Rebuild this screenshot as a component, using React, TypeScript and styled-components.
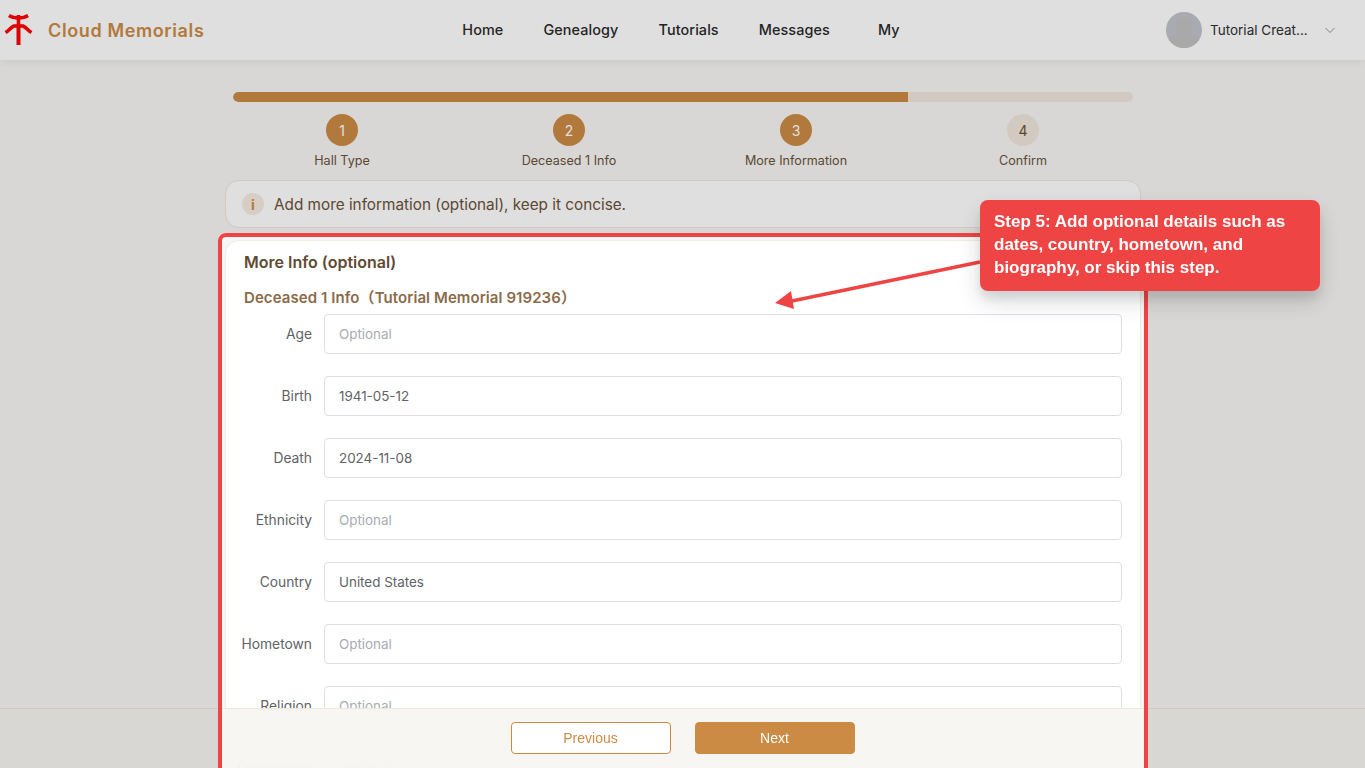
import React from 'react';
import styled, { createGlobalStyle } from 'styled-components';

const Global = createGlobalStyle`
  html, body { margin: 0; padding: 0; height: 100%; overflow: hidden; background: #f7f6f4; }
  body { font-family: Inter, "Noto Sans CJK SC", sans-serif; }
  * { box-sizing: border-box; }
`;

const Page = styled.div`
  position: relative;
  width: 100%;
  height: 768px;
  overflow: hidden;
  background: #f7f6f4;
`;

const Header = styled.header`
  height: 60px;
  background: #ffffff;
  box-shadow: 0 2px 8px rgba(0, 0, 0, 0.06);
  display: grid;
  grid-template-columns: 1fr auto 1fr;
  align-items: center;
  padding: 0 29px 0 4px;
`;

const Brand = styled.div`
  display: flex;
  align-items: center;
  gap: 15px;
`;

const BrandName = styled.span`
  font-size: 18px;
  font-weight: 600;
  letter-spacing: 0.62px;
  color: #cc8b45;
`;

const Nav = styled.nav`
  display: flex;
  gap: 40px;
  margin: 0 0 2px 22px;
`;

const NavLink = styled.a`
  font-size: 14.4px;
  font-weight: 500;
  letter-spacing: 0.1px;
  color: #2a2a2a;
  &:last-child { margin-left: 8px; }
`;

const UserBox = styled.div`
  justify-self: end;
  display: flex;
  align-items: center;
`;

const Avatar = styled.div`
  width: 36px;
  height: 36px;
  border-radius: 50%;
  overflow: hidden;
  margin-right: 8px;
`;

const UserName = styled.span`
  font-size: 13.5px;
  color: #303133;
  margin-right: 16px;
  width: 98px;
  white-space: nowrap;
`;

const Main = styled.main`
  width: 916px;
  margin-left: 225px;
  padding-top: 32px;
`;

const Track = styled.div`
  width: 900px;
  height: 10px;
  margin: 0 auto;
  border-radius: 5px;
  background: #f0e6dc;
  overflow: hidden;
`;

const TrackFill = styled.div`
  width: 75%;
  height: 100%;
  border-radius: 5px 0 0 5px;
  background: #cc8b45;
`;

const Steps = styled.ol`
  list-style: none;
  margin: 12px 0 0 3.5px;
  padding: 0;
  width: 908px;
  display: grid;
  grid-template-columns: repeat(4, 1fr);
`;

const Step = styled.li`
  display: flex;
  flex-direction: column;
  align-items: center;
  gap: 7px;
`;

const StepDot = styled.span<{ $done: boolean }>`
  width: 32px;
  height: 32px;
  border-radius: 50%;
  display: flex;
  align-items: center;
  justify-content: center;
  font-size: 14px;
  font-weight: 400;
  background: ${(p) => (p.$done ? '#cc8b45' : '#f0e6dc')};
  color: ${(p) => (p.$done ? '#ffffff' : '#6b4f2f')};
`;

const StepLabel = styled.span`
  font-size: 12.6px;
  line-height: 15px;
  color: #6b5238;
`;

const Notice = styled.div`
  margin-top: 12px;
  height: 48px;
  display: flex;
  align-items: center;
  gap: 10px;
  padding: 0 16px;
  background: #ffffff;
  border: 1px solid #f0e6dc;
  border-radius: 14px;
`;

const NoticeIcon = styled.span`
  width: 22px;
  height: 22px;
  border-radius: 50%;
  background: #f5ebe0;
  color: #cc8b45;
  display: flex;
  align-items: center;
  justify-content: center;
  font-size: 14px;
  font-weight: 700;
`;

const NoticeText = styled.span`
  font-size: 15.3px;
  color: #6b5238;
`;

const Card = styled.section`
  margin-top: 12px;
  background: #ffffff;
  border: 1px solid #f3ece3;
  border-radius: 14px;
  padding: 11px 18px 0;
`;

const CardTitle = styled.h2`
  margin: 0;
  font-size: 16px;
  line-height: 20px;
  font-weight: 600;
  color: #5f4a33;
`;

const SubTitle = styled.h3`
  margin: 16px 0 6px;
  font-size: 15px;
  line-height: 20px;
  font-weight: 600;
  letter-spacing: 0.08px;
  color: #8b6b4a;
`;

const FormRow = styled.div`
  display: grid;
  grid-template-columns: 68px 1fr;
  column-gap: 12px;
  align-items: center;
  margin-bottom: 22px;
`;

const FieldLabel = styled.label`
  font-size: 13.8px;
  color: #606266;
  display: flex;
  justify-content: flex-end;
  white-space: nowrap;
`;

const Input = styled.input`
  height: 40px;
  width: 100%;
  padding: 0 14px;
  font: 13.4px Inter, sans-serif;
  color: #606266;
  background: #ffffff;
  border: 1px solid #dcdfe6;
  border-radius: 4px;
  outline: none;
  &::placeholder { color: #a8abb2; opacity: 1; }
`;

const Footer = styled.footer`
  position: absolute;
  left: 0;
  right: 0;
  bottom: 0;
  height: 60px;
  padding-bottom: 1px;
  display: flex;
  justify-content: center;
  align-items: center;
  gap: 24px;
  background: rgba(247, 245, 241, 0.94);
  backdrop-filter: blur(8px);
  border-top: 1px solid #f0e6dc;
`;

const FooterButton = styled.button<{ $primary?: boolean }>`
  width: 160px;
  height: 32px;
  border-radius: 4px;
  border: 1px solid #cc8b45;
  font: 500 14px "Liberation Sans", Arial, sans-serif;
  background: ${(p) => (p.$primary ? '#cc8b45' : '#ffffff')};
  color: ${(p) => (p.$primary ? '#ffffff' : '#cc8b45')};
`;

const Spotlight = styled.div`
  position: absolute;
  left: 218px;
  top: 233px;
  width: 930px;
  height: 700px;
  border: 4px solid #ef4444;
  border-radius: 8px;
  box-shadow: 0 0 0 3000px rgba(0, 0, 0, 0.125);
  pointer-events: none;
`;

const Arrow = styled.svg`
  position: absolute;
  left: 770px;
  top: 255px;
`;

const Callout = styled.div`
  position: absolute;
  left: 980px;
  top: 200px;
  width: 340px;
  height: 91px;
  padding: 10px 14px;
  border-radius: 8px;
  background: #ef4444;
  color: #ffffff;
  font: 700 17px/23px "Liberation Sans", Arial, sans-serif;
  box-shadow: 0 10px 25px rgba(0, 0, 0, 0.15), 0 8px 10px rgba(0, 0, 0, 0.08);
`;

const fields = [
  ['Age', ''],
  ['Birth', '1941-05-12'],
  ['Death', '2024-11-08'],
  ['Ethnicity', ''],
  ['Country', 'United States'],
  ['Hometown', ''],
  ['Religion', ''],
  ['Occupation', ''],
];

const steps = [
  ['1', 'Hall Type', true],
  ['2', 'Deceased 1 Info', true],
  ['3', 'More Information', true],
  ['4', 'Confirm', false],
] as const;

export default function App() {
  return (
    <Page>
      <Global />
      <Header>
        <Brand>
          <svg width="29" height="34" viewBox="0 0 29 34" aria-hidden="true">
            <path d="M5 2.5 C8 4.5 11 5 14.5 5 C18 5 21 4.5 24 2.5" fill="none" stroke="#ff0000" strokeWidth="3.4" />
            <path d="M14.5 2 V14" fill="none" stroke="#ff0000" strokeWidth="3.6" />
            <path d="M1.5 19.5 C5 17.5 7 14 10 13 H19 C22 14 24 17.5 27.5 19.5" fill="none" stroke="#ff0000" strokeWidth="3.6" />
            <path d="M14.5 12 V32" fill="none" stroke="#ff0000" strokeWidth="4" />
          </svg>
          <BrandName>Cloud Memorials</BrandName>
        </Brand>
        <Nav>
          {['Home', 'Genealogy', 'Tutorials', 'Messages', 'My'].map((n) => (
            <NavLink key={n}>{n}</NavLink>
          ))}
        </Nav>
        <UserBox>
          <Avatar>
            <svg width="36" height="36" viewBox="0 0 36 36" aria-hidden="true">
              <rect width="36" height="36" fill="#c0c4cc" />
              <circle cx="18" cy="13" r="9" fill="#c2c2c2" />
              <ellipse cx="18" cy="37" rx="19" ry="16" fill="#c2c2c2" />
            </svg>
          </Avatar>
          <UserName>Tutorial Creat...</UserName>
          <svg width="12" height="12" viewBox="0 0 12 12" aria-hidden="true">
            <path d="M1.5 4 L6 8.5 L10.5 4" fill="none" stroke="#909399" strokeWidth="1" />
          </svg>
        </UserBox>
      </Header>
      <Main>
        <Track><TrackFill /></Track>
        <Steps>
          {steps.map(([n, label, done]) => (
            <Step key={n}>
              <StepDot $done={done}>{n}</StepDot>
              <StepLabel>{label}</StepLabel>
            </Step>
          ))}
        </Steps>
        <Notice>
          <NoticeIcon>i</NoticeIcon>
          <NoticeText>Add more information (optional), keep it concise.</NoticeText>
        </Notice>
        <Card>
          <CardTitle>More Info (optional)</CardTitle>
          <SubTitle>Deceased 1 Info（Tutorial Memorial 919236）</SubTitle>
          {fields.map(([label, value]) => (
            <FormRow key={label}>
              <FieldLabel>{label}</FieldLabel>
              <Input placeholder="Optional" defaultValue={value} />
            </FormRow>
          ))}
        </Card>
      </Main>
      <Footer>
        <FooterButton>Previous</FooterButton>
        <FooterButton $primary>Next</FooterButton>
      </Footer>
      <Spotlight />
      <Arrow width="215" height="60" viewBox="0 0 215 60" aria-hidden="true">
        <path d="M210 7 L22 46" fill="none" stroke="#ef4444" strokeWidth="3.5" />
        <path d="M5 48 L21 36 L24 54 Z" fill="#ef4444" />
      </Arrow>
      <Callout>Step 5: Add optional details such as dates, country, hometown, and biography, or skip this step.</Callout>
    </Page>
  );
}
